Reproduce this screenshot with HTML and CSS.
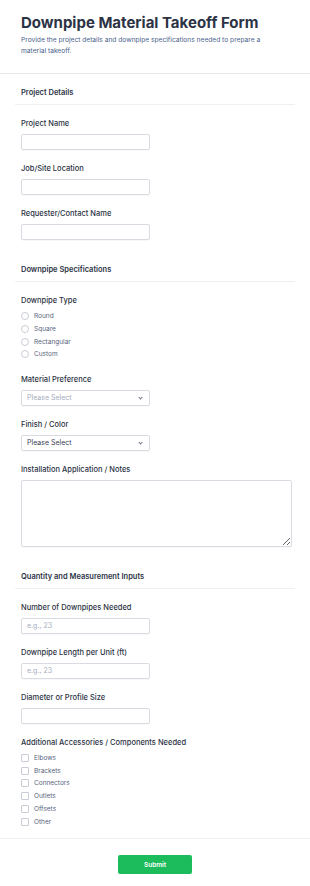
FILE: index.html
```html
<!DOCTYPE html>
<html lang="en">
<head>
    <meta charset="UTF-8">
    <meta name="viewport" content="width=device-width, initial-scale=1.0">
    <title>Downpipe Material Takeoff Form</title>
    <link rel="stylesheet" href="styles.css">
</head>
<body>
    <form class="form">
        <div class="form-header">
            <h1>Downpipe Material Takeoff Form</h1>
            <p>Provide the project details and downpipe specifications needed to prepare a material takeoff.</p>
        </div>

        <section class="section">
            <h2 class="section-title">Project Details</h2>
            <div class="field">
                <label for="project-name">Project Name</label>
                <input type="text" id="project-name" class="input">
            </div>
            <div class="field">
                <label for="site">Job/Site Location</label>
                <input type="text" id="site" class="input">
            </div>
            <div class="field">
                <label for="contact">Requester/Contact Name</label>
                <input type="text" id="contact" class="input">
            </div>
        </section>

        <section class="section">
            <h2 class="section-title">Downpipe Specifications</h2>
            <div class="field">
                <span class="label">Downpipe Type</span>
                <div class="options">
                    <label class="option"><input type="radio" name="type"><span>Round</span></label>
                    <label class="option"><input type="radio" name="type"><span>Square</span></label>
                    <label class="option"><input type="radio" name="type"><span>Rectangular</span></label>
                    <label class="option"><input type="radio" name="type"><span>Custom</span></label>
                </div>
            </div>
            <div class="field">
                <label for="material">Material Preference</label>
                <div class="select placeholder">
                    <select id="material">
                        <option>Please Select</option>
                    </select>
                </div>
            </div>
            <div class="field">
                <label for="finish">Finish / Color</label>
                <div class="select">
                    <select id="finish">
                        <option>Please Select</option>
                    </select>
                </div>
            </div>
            <div class="field">
                <label for="notes">Installation Application / Notes</label>
                <textarea id="notes" class="textarea"></textarea>
            </div>
        </section>

        <section class="section">
            <h2 class="section-title">Quantity and Measurement Inputs</h2>
            <div class="field">
                <label for="count">Number of Downpipes Needed</label>
                <input type="text" id="count" class="input" placeholder="e.g., 23">
            </div>
            <div class="field">
                <label for="length">Downpipe Length per Unit (ft)</label>
                <input type="text" id="length" class="input" placeholder="e.g., 23">
            </div>
            <div class="field">
                <label for="size">Diameter or Profile Size</label>
                <input type="text" id="size" class="input">
            </div>
            <div class="field">
                <span class="label">Additional Accessories / Components Needed</span>
                <div class="options">
                    <label class="option"><input type="checkbox"><span>Elbows</span></label>
                    <label class="option"><input type="checkbox"><span>Brackets</span></label>
                    <label class="option"><input type="checkbox"><span>Connectors</span></label>
                    <label class="option"><input type="checkbox"><span>Outlets</span></label>
                    <label class="option"><input type="checkbox"><span>Offsets</span></label>
                    <label class="option"><input type="checkbox"><span>Other</span></label>
                </div>
            </div>
        </section>

        <div class="form-footer">
            <button type="submit" class="submit-btn">Submit</button>
        </div>
    </form>
</body>
</html>
```

FILE: styles.css
```css
body {
    margin: 0;
    background-color: #fff;
    font-family: Inter, 'Noto Sans', sans-serif;
    color: #2c3345;
}

.form-header {
    padding: 12px 25px 16px 21px;
    border-bottom: 1px solid #e6e8ec;
}

.form-header h1 {
    margin: 0;
    font-size: 15px;
    line-height: 22px;
    font-weight: 700;
    color: #2c3345;
}

.form-header p {
    margin: 1px 0 0;
    font-size: 6.65px;
    line-height: 11px;
    color: #4b5f8c;
}

.section {
    padding-bottom: 11px;
}

.section-title {
    margin: 0 15px;
    padding: 13px 6px 5px;
    font-size: 7.5px;
    line-height: 12px;
    font-weight: 600;
    color: #2c3345;
    border-bottom: 1px solid #eef0f3;
}

.field {
    padding: 0 21px;
    margin-top: 13px;
}

.field > label,
.field > .label {
    display: block;
    margin-bottom: 4px;
    font-size: 7.5px;
    line-height: 12px;
    font-weight: 500;
    color: #2c3345;
}

.field > .label {
    margin-bottom: 3px;
}

.input,
.select select,
.textarea {
    display: block;
    box-sizing: border-box;
    width: 129px;
    height: 16px;
    margin: 0;
    padding: 0 5px;
    border: 1px solid #d8dbe2;
    border-radius: 2px;
    background-color: #fff;
    box-shadow: 0 1px 1px rgba(0, 0, 0, 0.03);
    font-family: inherit;
    font-size: 7px;
    color: #2c3345;
}

.input::placeholder {
    color: #a5adbd;
}

.select {
    position: relative;
    width: 129px;
}

.select select {
    appearance: none;
    -webkit-appearance: none;
    color: #3a4256;
}

.select.placeholder select {
    color: #a5adbd;
}

.select::after {
    content: '';
    position: absolute;
    right: 8px;
    top: 6px;
    width: 2px;
    height: 2px;
    border-right: 1px solid #6b7385;
    border-bottom: 1px solid #6b7385;
    transform: rotate(45deg);
}

.textarea {
    width: 271px;
    height: 67px;
    padding: 4px 5px;
    resize: vertical;
}

.options {
    display: flex;
    flex-direction: column;
}

.option {
    display: flex;
    align-items: center;
    gap: 5px;
    height: 12.7px;
    font-size: 6.5px;
    color: #57647e;
}

.option input {
    appearance: none;
    -webkit-appearance: none;
    box-sizing: border-box;
    width: 8px;
    height: 8px;
    margin: 0;
    border: 1px solid #c8cdd6;
    background-color: #fff;
}

.option input[type="radio"] {
    border-radius: 50%;
}

.option input[type="checkbox"] {
    border-radius: 1px;
}

.form-footer {
    margin-top: -1px;
    padding: 12px 0 17px;
    border-top: 1px solid #eceef2;
    text-align: center;
}

.submit-btn {
    width: 74px;
    height: 19px;
    border: none;
    border-radius: 2px;
    background-color: #1cbb5b;
    color: #fff;
    font-family: inherit;
    font-size: 6.5px;
    font-weight: 600;
    cursor: pointer;
}
```
